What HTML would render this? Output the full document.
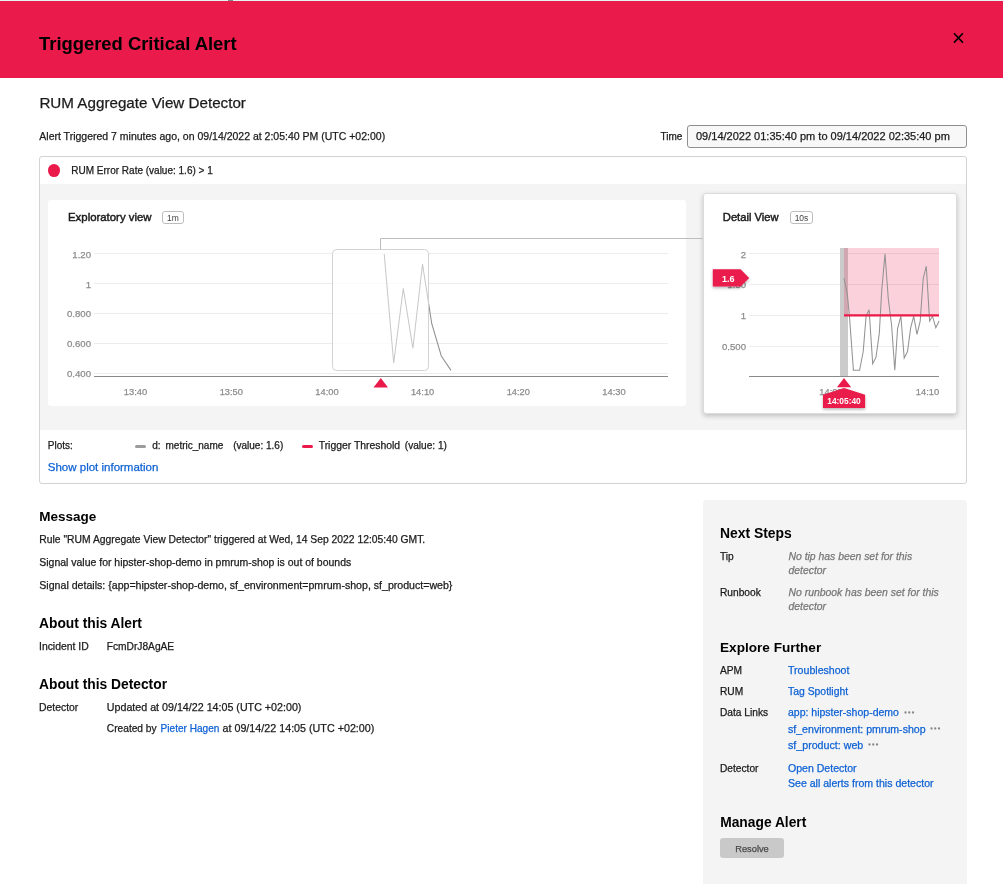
<!DOCTYPE html>
<html><head><meta charset="utf-8"><style>
html,body{margin:0;padding:0;width:1003px;height:884px;overflow:hidden;background:#fff}
body{position:relative;font-family:"Liberation Sans", sans-serif;will-change:transform}
.t{position:absolute;white-space:nowrap;font-family:"Liberation Sans", sans-serif}
.pb{display:inline-block;width:0;height:0}
.t{-webkit-text-stroke:0.25px currentColor}
.b{-webkit-text-stroke:0}
</style></head><body>
<div style="position:absolute;left:0px;top:0px;width:1003px;height:1px;background:#e3f4ef"></div>
<div style="position:absolute;left:228px;top:0px;width:5px;height:1px;background:#7d8a86"></div>
<div style="position:absolute;left:0px;top:1px;width:1003px;height:77px;background:#ea1a4b"></div>
<div class="t b" style="left:39.00px;top:35.00px;font-size:18.4px;line-height:18.4px;color:#000;font-weight:bold;">Triggered Critical Alert</div>
<svg style="position:absolute;left:950px;top:30px" width="17" height="17" viewBox="0 0 17 17"><path d="M4 3.3 L12.9 12.6 M12.9 3.3 L4 12.6" stroke="#000" stroke-width="1.6" fill="none"/></svg>
<div class="t" style="left:39.40px;top:95.01px;font-size:15.2px;line-height:15.2px;color:#1b1b1b;">RUM Aggregate View Detector</div>
<div class="t" style="left:39.30px;top:131.00px;font-size:10.5px;line-height:10.5px;color:#1b1b1b;">Alert Triggered 7 minutes ago, on 09/14/2022 at 2:05:40 PM (UTC +02:00)</div>
<div class="t" style="left:660.50px;top:132.01px;font-size:10px;line-height:10px;color:#1b1b1b;">Time</div>
<div style="position:absolute;left:687px;top:125px;width:280px;height:23px;box-sizing:border-box;border:1px solid #8f8f8f;border-radius:3px;background:#f8f8f8"></div>
<div class="t" style="left:696.00px;top:131.00px;font-size:11px;line-height:11px;color:#1b1b1b;">09/14/2022 01:35:40 pm to 09/14/2022 02:35:40 pm</div>
<div style="position:absolute;left:39px;top:156px;width:928px;height:328px;box-sizing:border-box;border:1px solid #d3d3d3;border-radius:3px;background:#fff"></div>
<div style="position:absolute;left:40px;top:184px;width:926px;height:246px;background:#f4f4f4"></div>
<div style="position:absolute;left:48px;top:164.2px;width:12px;height:12.6px;border-radius:50%;background:#ea1a4b"></div>
<div class="t" style="left:71.30px;top:166.00px;font-size:10px;line-height:10px;color:#1b1b1b;">RUM Error Rate (value: 1.6) &gt; 1</div>
<div style="position:absolute;left:48px;top:200px;width:638px;height:206px;background:#fff;border-radius:3px"></div>
<div class="t" style="left:68.00px;top:212.01px;font-size:11.4px;line-height:11.4px;color:#1b1b1b;-webkit-text-stroke:0.45px currentColor;">Exploratory view</div>
<div style="position:absolute;left:162px;top:211px;width:22px;height:13px;box-sizing:border-box;border:1px solid #bdbdbd;border-radius:3px"></div>
<div class="t" style="left:73.00px;width:200px;text-align:center;top:214.01px;font-size:8.5px;line-height:8.5px;color:#444;-webkit-text-stroke:0;">1m</div>
<div style="position:absolute;left:703px;top:193px;width:254px;height:221px;box-sizing:border-box;background:#fff;border:1px solid #dcdcdc;border-radius:3px;box-shadow:0 2px 5px rgba(0,0,0,0.22)"></div>
<div class="t" style="left:722.80px;top:212.00px;font-size:11.2px;line-height:11.2px;color:#1b1b1b;-webkit-text-stroke:0.45px currentColor;">Detail View</div>
<div style="position:absolute;left:790px;top:211px;width:23px;height:13px;box-sizing:border-box;border:1px solid #bdbdbd;border-radius:3px"></div>
<div class="t" style="left:701.50px;width:200px;text-align:center;top:214.01px;font-size:8.5px;line-height:8.5px;color:#444;-webkit-text-stroke:0;">10s</div>
<div class="t" style="left:47.80px;top:441.00px;font-size:10px;line-height:10px;color:#1b1b1b;">Plots:</div>
<div style="position:absolute;left:135px;top:445px;width:11px;height:2.5px;background:#9c9c9c;border-radius:1.5px"></div>
<div class="t" style="left:152.30px;top:441.00px;font-size:10px;line-height:10px;color:#1b1b1b;">d:</div>
<div class="t" style="left:165.50px;top:441.00px;font-size:10px;line-height:10px;color:#1b1b1b;">metric_name</div>
<div class="t" style="left:233.20px;top:441.00px;font-size:10px;line-height:10px;color:#1b1b1b;">(value: 1.6)</div>
<div style="position:absolute;left:302px;top:445px;width:11px;height:2.5px;background:#ea1a4b;border-radius:1.5px"></div>
<div class="t" style="left:318.70px;top:441.01px;font-size:10.4px;line-height:10.4px;color:#1b1b1b;">Trigger Threshold</div>
<div class="t" style="left:404.80px;top:441.01px;font-size:10.1px;line-height:10.1px;color:#1b1b1b;">(value: 1)</div>
<div class="t" style="left:47.80px;top:462.00px;font-size:11.5px;line-height:11.5px;color:#0f62d5;">Show plot information</div>
<div class="t b" style="left:39.30px;top:510.01px;font-size:13.5px;line-height:13.5px;color:#000;font-weight:bold;">Message</div>
<div class="t" style="left:39.30px;top:535.01px;font-size:10.33px;line-height:10.33px;color:#1b1b1b;">Rule "RUM Aggregate View Detector" triggered at Wed, 14 Sep 2022 12:05:40 GMT.</div>
<div class="t" style="left:39.30px;top:558.01px;font-size:10.47px;line-height:10.47px;color:#1b1b1b;">Signal value for hipster-shop-demo in pmrum-shop is out of bounds</div>
<div class="t" style="left:39.30px;top:580.01px;font-size:10.6px;line-height:10.6px;color:#1b1b1b;">Signal details: {app=hipster-shop-demo, sf_environment=pmrum-shop, sf_product=web}</div>
<div class="t b" style="left:39.00px;top:617.01px;font-size:13.8px;line-height:13.8px;color:#000;font-weight:bold;">About this Alert</div>
<div class="t" style="left:39.00px;top:642.01px;font-size:10.4px;line-height:10.4px;color:#1b1b1b;">Incident ID</div>
<div class="t" style="left:106.80px;top:642.01px;font-size:10.2px;line-height:10.2px;color:#1b1b1b;">FcmDrJ8AgAE</div>
<div class="t b" style="left:39.00px;top:678.01px;font-size:13.8px;line-height:13.8px;color:#000;font-weight:bold;">About this Detector</div>
<div class="t" style="left:39.00px;top:703.01px;font-size:10.4px;line-height:10.4px;color:#1b1b1b;">Detector</div>
<div class="t" style="left:106.80px;top:702.00px;font-size:10.7px;line-height:10.7px;color:#1b1b1b;">Updated at 09/14/22 14:05 (UTC +02:00)</div>
<div class="t" style="left:106.80px;top:724.01px;font-size:10.2px;line-height:10.2px;color:#1b1b1b;">Created by</div>
<div class="t" style="left:160.60px;top:724.01px;font-size:10.07px;line-height:10.07px;color:#0f62d5;">Pieter Hagen</div>
<div class="t" style="left:222.50px;top:723.00px;font-size:10.74px;line-height:10.74px;color:#1b1b1b;">at 09/14/22 14:05 (UTC +02:00)</div>
<div style="position:absolute;left:703px;top:500px;width:264px;height:384px;background:#f4f4f4;border-radius:4px 4px 0 0"></div>
<div class="t b" style="left:720.00px;top:527.01px;font-size:13.9px;line-height:13.9px;color:#000;font-weight:bold;">Next Steps</div>
<div class="t" style="left:720.00px;top:552.01px;font-size:10.2px;line-height:10.2px;color:#1b1b1b;">Tip</div>
<div class="t" style="left:788.50px;top:552.01px;font-size:10.4px;line-height:10.4px;color:#777;font-style:italic;">No tip has been set for this</div>
<div class="t" style="left:788.50px;top:566.01px;font-size:10.4px;line-height:10.4px;color:#777;font-style:italic;">detector</div>
<div class="t" style="left:720.00px;top:588.01px;font-size:10.2px;line-height:10.2px;color:#1b1b1b;">Runbook</div>
<div class="t" style="left:788.50px;top:588.01px;font-size:10.4px;line-height:10.4px;color:#777;font-style:italic;">No runbook has been set for this</div>
<div class="t" style="left:788.50px;top:602.01px;font-size:10.4px;line-height:10.4px;color:#777;font-style:italic;">detector</div>
<div class="t b" style="left:720.00px;top:641.00px;font-size:13.6px;line-height:13.6px;color:#000;font-weight:bold;">Explore Further</div>
<div class="t" style="left:720.00px;top:666.01px;font-size:10.2px;line-height:10.2px;color:#1b1b1b;">APM</div>
<div class="t" style="left:788.00px;top:665.01px;font-size:10.6px;line-height:10.6px;color:#0f62d5;">Troubleshoot</div>
<div class="t" style="left:720.00px;top:687.01px;font-size:10.2px;line-height:10.2px;color:#1b1b1b;">RUM</div>
<div class="t" style="left:788.00px;top:687.00px;font-size:10.4px;line-height:10.4px;color:#0f62d5;">Tag Spotlight</div>
<div class="t" style="left:720.00px;top:708.01px;font-size:10.2px;line-height:10.2px;color:#1b1b1b;">Data Links</div>
<div class="t" style="left:788.00px;top:707.00px;font-size:10.5px;line-height:10.5px;color:#0f62d5;">app: hipster-shop-demo</div>
<div class="t" style="left:788.00px;top:724.01px;font-size:10.58px;line-height:10.58px;color:#0f62d5;">sf_environment: pmrum-shop</div>
<div class="t" style="left:788.00px;top:740.01px;font-size:10.66px;line-height:10.66px;color:#0f62d5;">sf_product: web</div>
<svg style="position:absolute;left:904.20px;top:711.40px" width="12" height="3"><circle cx="1.50" cy="1.5" r="1.15" fill="#888"/><circle cx="5.25" cy="1.5" r="1.15" fill="#888"/><circle cx="9.00" cy="1.5" r="1.15" fill="#888"/></svg>
<svg style="position:absolute;left:930.10px;top:727.40px" width="12" height="3"><circle cx="1.50" cy="1.5" r="1.15" fill="#888"/><circle cx="5.25" cy="1.5" r="1.15" fill="#888"/><circle cx="9.00" cy="1.5" r="1.15" fill="#888"/></svg>
<svg style="position:absolute;left:867.70px;top:743.30px" width="12" height="3"><circle cx="1.50" cy="1.5" r="1.15" fill="#888"/><circle cx="5.25" cy="1.5" r="1.15" fill="#888"/><circle cx="9.00" cy="1.5" r="1.15" fill="#888"/></svg>
<div class="t" style="left:720.00px;top:764.01px;font-size:10.2px;line-height:10.2px;color:#1b1b1b;">Detector</div>
<div class="t" style="left:788.00px;top:763.01px;font-size:10.55px;line-height:10.55px;color:#0f62d5;">Open Detector</div>
<div class="t" style="left:788.00px;top:778.01px;font-size:10.57px;line-height:10.57px;color:#0f62d5;">See all alerts from this detector</div>
<div class="t b" style="left:720.20px;top:816.00px;font-size:13.8px;line-height:13.8px;color:#000;font-weight:bold;">Manage Alert</div>
<div style="position:absolute;left:720px;top:838px;width:64px;height:20px;background:#c9c9c9;border-radius:3px"></div>
<div class="t" style="left:652.00px;width:200px;text-align:center;top:845.00px;font-size:9.3px;line-height:9.3px;color:#4a4a4a;">Resolve</div>
<svg style="position:absolute;left:0;top:0" width="1003" height="884" viewBox="0 0 1003 884"><line x1="94" y1="253.5" x2="668" y2="253.5" stroke="#ececec" stroke-width="1"/><line x1="94" y1="283.5" x2="668" y2="283.5" stroke="#ececec" stroke-width="1"/><line x1="94" y1="313.5" x2="668" y2="313.5" stroke="#ececec" stroke-width="1"/><line x1="94" y1="343.5" x2="668" y2="343.5" stroke="#ececec" stroke-width="1"/><line x1="94" y1="373.5" x2="668" y2="373.5" stroke="#ececec" stroke-width="1"/><line x1="94" y1="376.5" x2="668" y2="376.5" stroke="#8a8a8a" stroke-width="1.2"/><defs><clipPath id="selc"><rect x="332.5" y="249.5" width="96" height="121" rx="4"/></clipPath><clipPath id="selo"><path d="M0 0H1003V884H0Z M332.5 249.5 V370.5 H428.5 V249.5 Z" clip-rule="evenodd"/></clipPath></defs><polyline fill="none" stroke="#909090" stroke-width="1.05" clip-path="url(#selo)" points="384.2,254 393.7,363.1 403.3,288.3 412.9,348.3 422.5,264.2 431.7,323.3 441.3,356 451,370.4"/><rect x="332.5" y="249.5" width="96" height="121" rx="4" fill="rgba(255,255,255,0.75)" stroke="#d3d3d3" stroke-width="1"/><polyline fill="none" stroke="#c9c9c9" stroke-width="1.05" clip-path="url(#selc)" points="384.2,254 393.7,363.1 403.3,288.3 412.9,348.3 422.5,264.2 431.7,323.3 441.3,356 451,370.4"/><polyline fill="none" stroke="#bdbdbd" stroke-width="1" points="380.5,249.5 380.5,238.5 703,238.5"/><polygon points="373.5,387.5 388,387.5 380.8,378" fill="#ea1a4b"/><line x1="749" y1="253.5" x2="939" y2="253.5" stroke="#ececec" stroke-width="1"/><line x1="749" y1="284.5" x2="939" y2="284.5" stroke="#ececec" stroke-width="1"/><line x1="749" y1="315.5" x2="939" y2="315.5" stroke="#ececec" stroke-width="1"/><line x1="749" y1="346.5" x2="939" y2="346.5" stroke="#ececec" stroke-width="1"/><rect x="840" y="248" width="8" height="128" fill="#cbcbcb"/><rect x="844" y="248" width="95" height="67" fill="rgba(234,26,75,0.2)"/><line x1="749" y1="376.5" x2="939" y2="376.5" stroke="#8a8a8a" stroke-width="1.2"/><polyline fill="none" stroke="#939393" stroke-width="1.05" points="844.0,278.0 847.3,294.1 849.4,315.4 853.4,370.3 859.6,370.3 863.2,351.5 866.1,316.2 869.1,309.7 872.7,363.8 876.0,357.2 879.3,333.4 881.7,290.8 885.0,253.9 888.3,299 891.6,325.2 894.8,370.3 897.6,328.5 900.9,316.2 904.2,358 907.5,351.5 910.7,327.7 913.7,316.2 917.0,334.3 920.2,321.1 923.2,278.5 926.3,266.2 929.6,321.1 932.5,316.2 935.8,327.7 939.1,321.1"/><line x1="844" y1="315.4" x2="939" y2="315.4" stroke="#ea1a4b" stroke-width="2.2"/></svg>
<div class="t" style="right:912.00px;top:250.00px;font-size:9.6px;line-height:9.6px;color:#8c8c8c;text-align:right;">1.20</div>
<div class="t" style="right:912.00px;top:280.00px;font-size:9.6px;line-height:9.6px;color:#8c8c8c;text-align:right;">1</div>
<div class="t" style="right:912.00px;top:309.01px;font-size:9.6px;line-height:9.6px;color:#8c8c8c;text-align:right;">0.800</div>
<div class="t" style="right:912.00px;top:339.01px;font-size:9.6px;line-height:9.6px;color:#8c8c8c;text-align:right;">0.600</div>
<div class="t" style="right:912.00px;top:369.01px;font-size:9.6px;line-height:9.6px;color:#8c8c8c;text-align:right;">0.400</div>
<div class="t" style="left:35.50px;width:200px;text-align:center;top:388.00px;font-size:9.3px;line-height:9.3px;color:#8c8c8c;">13:40</div>
<div class="t" style="left:131.30px;width:200px;text-align:center;top:388.00px;font-size:9.3px;line-height:9.3px;color:#8c8c8c;">13:50</div>
<div class="t" style="left:227.00px;width:200px;text-align:center;top:388.00px;font-size:9.3px;line-height:9.3px;color:#8c8c8c;">14:00</div>
<div class="t" style="left:322.60px;width:200px;text-align:center;top:388.00px;font-size:9.3px;line-height:9.3px;color:#8c8c8c;">14:10</div>
<div class="t" style="left:418.30px;width:200px;text-align:center;top:388.00px;font-size:9.3px;line-height:9.3px;color:#8c8c8c;">14:20</div>
<div class="t" style="left:514.00px;width:200px;text-align:center;top:388.00px;font-size:9.3px;line-height:9.3px;color:#8c8c8c;">14:30</div>
<div class="t" style="right:257.00px;top:250.01px;font-size:9.6px;line-height:9.6px;color:#8c8c8c;text-align:right;">2</div>
<div class="t" style="right:257.00px;top:280.01px;font-size:9.6px;line-height:9.6px;color:#8c8c8c;text-align:right;">1.50</div>
<div class="t" style="right:257.00px;top:311.01px;font-size:9.6px;line-height:9.6px;color:#8c8c8c;text-align:right;">1</div>
<div class="t" style="right:257.00px;top:342.01px;font-size:9.6px;line-height:9.6px;color:#8c8c8c;text-align:right;">0.500</div>
<div class="t" style="left:731.00px;width:200px;text-align:center;top:388.00px;font-size:9.3px;line-height:9.3px;color:#8c8c8c;">14:05</div>
<div class="t" style="left:827.50px;width:200px;text-align:center;top:388.00px;font-size:9.3px;line-height:9.3px;color:#8c8c8c;">14:10</div>
<svg style="position:absolute;left:0;top:0" width="1003" height="884" viewBox="0 0 1003 884"><defs><filter id="sh" x="-30%" y="-30%" width="160%" height="180%"><feDropShadow dx="0" dy="1.5" stdDeviation="1.6" flood-color="#000" flood-opacity="0.3"/></filter></defs><polygon points="712.8,269.3 740.6,269.3 749.2,277.9 740.6,286.5 712.8,286.5" fill="#ea1a4b" filter="url(#sh)"/><polygon points="837,387.3 851.2,387.3 844,378" fill="#ea1a4b"/><polygon points="823,394.7 844,388 865.1,394.7 865.1,408 823,408" fill="#ea1a4b" filter="url(#sh)"/></svg>
<div class="t b" style="left:722.00px;top:275.01px;font-size:9px;line-height:9px;color:#fff;font-weight:bold;">1.6</div>
<div class="t b" style="left:744.00px;width:200px;text-align:center;top:397.01px;font-size:8.4px;line-height:8.4px;color:#fff;font-weight:bold;">14:05:40</div>
</body></html>
